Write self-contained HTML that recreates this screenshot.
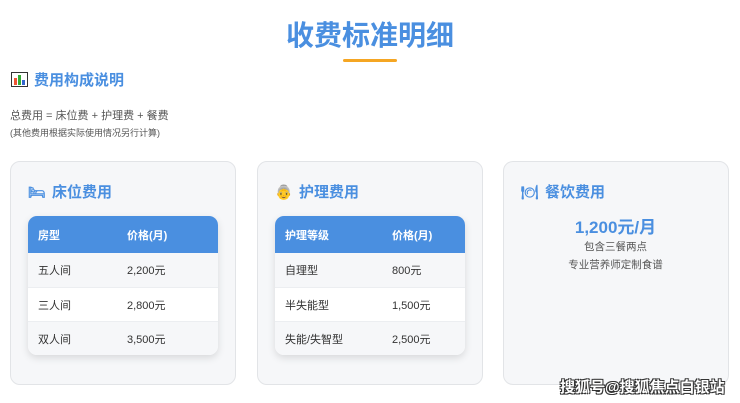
<!DOCTYPE html>
<html><head><meta charset="utf-8"><style>
*{margin:0;padding:0;box-sizing:border-box}
body{width:740px;height:403px;background:#fff;font-family:"Liberation Sans","Noto Sans CJK SC",sans-serif;position:relative;overflow:hidden;color:#444}
.a{position:absolute}
h1{position:absolute;left:0;width:740px;top:17px;text-align:center;font-size:28px;color:#4a8fe0;font-weight:bold;line-height:38px}
.card{position:absolute;top:161px;height:224px;background:#f6f7f9;border:1.5px solid #e2e4e7;border-radius:10px}
.ch{position:absolute;left:17px;top:20px;font-size:15px;font-weight:bold;color:#4a8fe0;line-height:20px}
.ch span{display:inline-block;width:18px;margin-right:6px;font-size:14px}
.tb{position:absolute;left:17px;top:54px;width:190px;border-radius:9px;overflow:hidden;background:#fff;box-shadow:0 3px 8px rgba(0,0,0,.12);font-size:11px}
.tr{height:34px;display:flex;align-items:center;border-top:1px solid #eceef1;color:#333}
.tr.h{height:37px;background:#4a8fe0;color:#fff;font-weight:bold;border:none}
.tr.g{background:#f6f7f9}
.tr div:first-child{padding-left:10px}
</style></head><body>
<h1>收费标准明细</h1>
<div class="a" style="left:343px;top:59px;width:54px;height:3px;background:#f5a623;border-radius:2px"></div>
<div class="a" style="left:11px;top:71px;font-size:15px;font-weight:bold;color:#4a8fe0;line-height:20px"><span style="display:inline-block;width:17px;height:15px;border:1.5px solid #333;background:#fff;vertical-align:-2px;margin-right:6px;position:relative"><i style="position:absolute;left:2px;bottom:1px;width:3px;height:7px;background:#e53"></i><i style="position:absolute;left:6px;bottom:1px;width:3px;height:10px;background:#3a3"></i><i style="position:absolute;left:10px;bottom:1px;width:3px;height:5px;background:#36c"></i></span>费用构成说明</div>
<div class="a" style="left:10px;top:107px;font-size:11px;color:#555">总费用 = 床位费 + 护理费 + 餐费</div>
<div class="a" style="left:10px;top:126px;font-size:9px;color:#555">(其他费用根据实际使用情况另行计算)</div>

<div class="card" style="left:10px;width:226px">
<div class="ch"><span>🛏</span>床位费用</div>
<div class="tb">
<div class="tr h"><div style="width:99px">房型</div><div>价格(月)</div></div>
<div class="tr g" style="border:none"><div style="width:99px">五人间</div><div>2,200元</div></div>
<div class="tr"><div style="width:99px">三人间</div><div>2,800元</div></div>
<div class="tr g"><div style="width:99px">双人间</div><div>3,500元</div></div>
</div></div>

<div class="card" style="left:257px;width:226px">
<div class="ch"><span>👵</span>护理费用</div>
<div class="tb">
<div class="tr h"><div style="width:117px">护理等级</div><div>价格(月)</div></div>
<div class="tr g" style="border:none"><div style="width:117px">自理型</div><div>800元</div></div>
<div class="tr"><div style="width:117px">半失能型</div><div>1,500元</div></div>
<div class="tr g"><div style="width:117px">失能/失智型</div><div>2,500元</div></div>
</div></div>

<div class="card" style="left:503px;width:226px">
<div class="ch"><span>🍽</span>餐饮费用</div>
<div class="a" style="left:0;width:223px;top:51px;text-align:center;font-size:17px;font-weight:bold;color:#4a8fe0">1,200元/月</div>
<div class="a" style="left:0;width:223px;top:76px;text-align:center;font-size:10.5px;color:#555;line-height:18px">包含三餐两点<br>专业营养师定制食谱</div>
</div>
<div class="a" style="left:560px;top:376px;font-size:15px;font-weight:bold;color:#fff;text-shadow:-1px -1px 0 #333,1px -1px 0 #333,-1px 1px 0 #333,1px 1px 0 #333">搜狐号@搜狐焦点白银站</div>
</body></html>
